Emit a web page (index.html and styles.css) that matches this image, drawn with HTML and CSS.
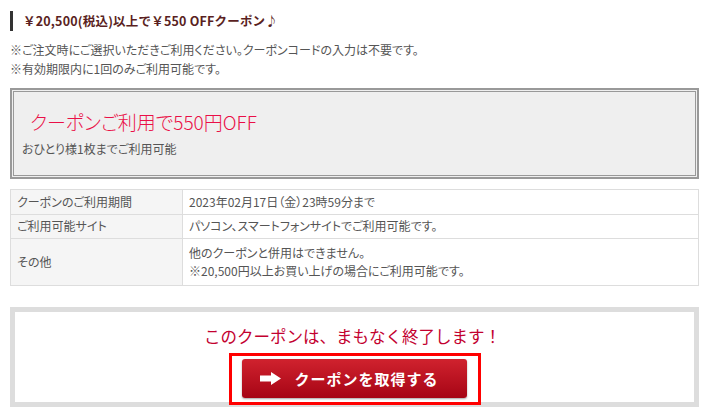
FILE: index.html
```html
<!DOCTYPE html>
<html lang="ja">
<head>
<meta charset="utf-8">
<link rel="stylesheet" href="styles.css">
</head>
<body>
<div class="wrap">
  <h2 class="heading">￥20,500(税込)以上で￥550 OFFクーポン♪</h2>
  <div class="notes">
    <p>※ご注文時にご選択いただきご利用ください。クーポンコードの入力は不要です。</p>
    <p>※有効期限内に1回のみご利用可能です。</p>
  </div>
  <div class="coupon">
    <p class="coupon-title">クーポンご利用で550円OFF</p>
    <p class="coupon-sub">おひとり様1枚までご利用可能</p>
  </div>
  <table class="info">
    <tr class="r1"><th>クーポンのご利用期間</th><td>2023年02月17日（金）23時59分まで</td></tr>
    <tr class="r2"><th>ご利用可能サイト</th><td>パソコン、スマートフォンサイトでご利用可能です。</td></tr>
    <tr class="r3"><th>その他</th><td>他のクーポンと併用はできません。<br>※20,500円以上お買い上げの場合にご利用可能です。</td></tr>
  </table>
  <div class="cta">
    <p class="cta-msg">このクーポンは、まもなく終了します！</p>
    <div class="cta-frame">
      <a class="cta-btn" href="#">
        <svg class="arrow" width="21" height="13" viewBox="0 0 21 13"><path d="M0 3.5H11V0L21 6.5L11 13V9.5H0Z" fill="#fff"/></svg>
        <span>クーポンを取得する</span>
      </a>
    </div>
  </div>
</div>
</body>
</html>
```
FILE: styles.css
```css
html, body {
  margin: 0;
  padding: 0;
  background: #fff;
}
body {
  font-family: "Noto Sans CJK JP", "Liberation Sans", sans-serif;
  font-feature-settings: "palt";
  color: #444;
  font-size: 12px;
}
p { margin: 0; }
.wrap {
  width: 689px;
  margin-left: 10px;
  padding-top: 11px;
}
.heading {
  margin: 0;
  height: 20px;
  line-height: 20px;
  border-left: 3px solid #333;
  padding-left: 10px;
  font-size: 12.5px;
  font-weight: bold;
  color: #5a1f22;
  font-feature-settings: normal;
  letter-spacing: 0.2px;
}
.notes {
  margin-top: 9px;
  line-height: 19px;
  color: #555;
}
.coupon {
  margin-top: 10px;
  height: 91px;
  box-sizing: border-box;
  border: 2px solid #999;
  box-shadow: inset 0 0 0 1px #efefef, inset 0 0 0 2px #999;
  background: #efefef;
  padding: 19px 10px 0 10px;
}
.coupon-title {
  margin-left: 8px;
  font-size: 19px;
  line-height: 26px;
  font-weight: 300;
  color: #ea0f47;
}
.coupon-sub {
  margin-top: 5px;
  line-height: 18px;
  color: #555;
}
.info {
  margin-top: 10px;
  width: 100%;
  border-collapse: collapse;
  color: #555;
}
.info th, .info td {
  border: 1px solid #ddd;
  text-align: left;
  font-weight: normal;
  padding: 0 6px;
  line-height: 18.5px;
}
.info th {
  width: 159px;
  background: #f5f5f5;
}
.info .r1 th, .info .r1 td { height: 24px; }
.info .r2 th, .info .r2 td { height: 23px; }
.info .r3 th, .info .r3 td { height: 46px; }
.cta {
  margin-top: 21px;
  height: 100px;
  box-sizing: border-box;
  border: 5px solid #ddd;
  display: flex;
  flex-direction: column;
  align-items: center;
  padding-top: 14px;
}
.cta-msg {
  font-size: 16.5px;
  line-height: 20px;
  color: #c3002f;
  font-feature-settings: normal;
  margin-right: 4px;
}
.cta-frame {
  margin-top: 7px;
  border: 3px solid #f00;
  padding: 3px 11px 4px 10px;
}
.cta-btn {
  display: flex;
  align-items: center;
  width: 225px;
  height: 39px;
  box-sizing: border-box;
  padding-left: 18px;
  border-radius: 3px;
  background: linear-gradient(#d0222e, #a60515);
  box-shadow: 0 1px 2px rgba(0,0,0,0.35);
  text-decoration: none;
  color: #fff;
}
.arrow { flex: none; }
.cta-btn span {
  margin-left: 14px;
  font-size: 15px;
  font-weight: bold;
  letter-spacing: 1px;
  font-feature-settings: normal;
}
```
